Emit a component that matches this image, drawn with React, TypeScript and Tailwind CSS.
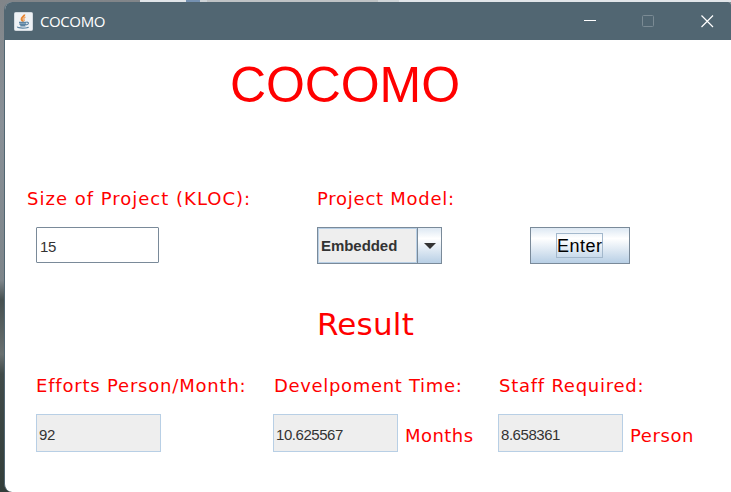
import type { ReactNode } from "react";

function Label({ children, className = "" }: { children: ReactNode; className?: string }) {
  return (
    <span
      className={
        "block shrink-0 whitespace-nowrap font-['DejaVu_Sans',sans-serif] text-[18px] leading-6 text-[#ff0000] " +
        className
      }
    >
      {children}
    </span>
  );
}

function ResultField({ value }: { value: string }) {
  return (
    <div className="flex h-[38px] w-[125px] shrink-0 items-center border border-[#b8cfe5] bg-[#eeeeee] pt-1 pl-0.5 text-[15px] tracking-[-0.45px] text-[#333333]">
      {value}
    </div>
  );
}

function JavaIcon() {
  return (
    <svg width="19" height="19" viewBox="0 0 19 19" fill="none">
      <rect x="0.5" y="0.5" width="18" height="18" rx="1" fill="#eef1f4" stroke="#d2d9df" />
      <path d="M10.3 2.5C10.8 4.5 7.2 5 7.6 7.2C7.8 8.4 9 8.8 9 9.8" stroke="#e8852f" strokeWidth="2" />
      <path d="M11.5 5C9.5 6 9.4 7.2 10.5 8.8" stroke="#eda05f" strokeWidth="1.3" />
      <path d="M5 10.5H12.5M5.5 12.3H12M6.3 13.8H11.5" stroke="#5e85a3" strokeWidth="1.4" />
      <path d="M12.5 10.2C15.5 9.8 15 12.5 12 12.8" stroke="#5e85a3" strokeWidth="1.2" />
      <path d="M3.5 14.7C3 16.5 14 16.5 14.5 14.9" stroke="#5e85a3" strokeWidth="1.3" />
    </svg>
  );
}

function TitleBar() {
  return (
    <header className="flex h-[38px] shrink-0 items-center bg-[#516672] pl-[9px]">
      <JavaIcon />
      <span className="ml-[7px] w-[66px] whitespace-nowrap font-['Open_Sans',sans-serif] text-[15px] leading-5 tracking-[-0.4px] text-white">
        COCOMO
      </span>
      <svg className="ml-[477px] shrink-0" width="132" height="14" viewBox="0 0 132 14" fill="none">
        <path d="M1 6.5H13" stroke="#ffffff" />
        <rect x="59.5" y="1.5" width="11" height="11" rx="1" stroke="#7b8b94" />
        <path d="M118.5 1.5L130 13M130 1.5L118.5 13" stroke="#ffffff" strokeWidth="1.2" />
      </svg>
    </header>
  );
}

export default function App() {
  return (
    <div className="flex h-[492px] w-[731px] flex-col overflow-hidden bg-[linear-gradient(#818589_0%,#899097_25%,#7d858a_57%,#465050_61%,#697070_72%,#414b49_76%,#333e3a_100%)] font-['Liberation_Sans',Arial,sans-serif]">
      <div className="flex h-0.5 shrink-0">
        <div className="ml-[140px] w-[46px] bg-[#e1e5e9]" />
        <div className="w-[14px] bg-[#7591b1]" />
        <div className="w-[7px] bg-[#cdd3d7]" />
        <div className="w-[171px] bg-[#bfc3c5]" />
        <div className="w-[21px] bg-[#d0d5d8]" />
        <div className="flex-1 bg-[#e1e5e9]" />
      </div>
      <div className="ml-1 flex h-[490px] w-[727px] flex-col overflow-hidden rounded-l-[8px] rounded-tr-[3px] border-l border-[#516672] bg-white">
        <TitleBar />
        <main className="flex flex-1 flex-col">
          <h1 className="mt-[17px] ml-[225px] h-[56px] whitespace-nowrap text-[50px] leading-[56px] tracking-[-0.1px] text-[#ff0000]">
            COCOMO
          </h1>

          <div className="mt-[74px] flex pl-[22px]">
            <Label className="w-[290px] tracking-[1px]">Size of Project (KLOC):</Label>
            <Label className="tracking-[0.75px]">Project Model:</Label>
          </div>

          <div className="mt-4 flex items-start pl-[31px]">
            <div className="flex h-9 w-[123px] items-center rounded-[1px] border border-[#7a8a99] bg-white pt-1 pl-[3px] text-[15px] tracking-[-0.45px] text-[#333333]">
              15
            </div>
            <div className="ml-[158px] flex h-[37px] w-[125px] border border-[#7a8a99]">
              <div className="flex w-[99px] items-center border border-[#b8cfe5] bg-[#eeeeee] pt-0.5 pl-0.5 text-[15px] font-bold tracking-[-0.05px] text-[#333333]">
                Embedded
              </div>
              <div className="flex flex-1 items-center justify-center border-l border-[#7a8a99] bg-[linear-gradient(#dde8f3_0%,#ffffff_30%,#b8cfe5_100%)]">
                <svg width="12" height="6" viewBox="0 0 12 6">
                  <path d="M0 0H12L6 6Z" fill="#333333" />
                </svg>
              </div>
            </div>
            <button className="ml-[88px] flex h-[37px] w-[100px] items-center border border-[#7a8a99] bg-[linear-gradient(#dde8f3_0%,#ffffff_30%,#b8cfe5_100%)] pl-[25px]">
              <span className="flex h-[25px] w-[47px] items-center border border-[#a3b8cc] pt-0.5 text-[18px] tracking-[0.5px] text-black">
                Enter
              </span>
            </button>
          </div>

          <h2 className="mt-[40px] ml-[312px] h-10 whitespace-nowrap font-['DejaVu_Sans',sans-serif] text-[31px] leading-10 tracking-[0.2px] text-[#ff0000]">
            Result
          </h2>

          <div className="mt-[30px] flex pl-[31px]">
            <Label className="w-[238px] tracking-[0.8px]">Efforts Person/Month:</Label>
            <Label className="w-[225px] tracking-[0.67px]">Develpoment Time:</Label>
            <Label className="tracking-[0.75px]">Staff Required:</Label>
          </div>

          <div className="mt-4 flex items-center pl-[31px]">
            <ResultField value="92" />
            <div className="ml-[112px] flex w-[225px] items-center gap-[7px]">
              <ResultField value="10.625567" />
              <Label className="mt-1.5 tracking-[0.45px]">Months</Label>
            </div>
            <div className="flex items-center gap-[7px]">
              <ResultField value="8.658361" />
              <Label className="mt-1.5 tracking-[0.6px]">Person</Label>
            </div>
          </div>
        </main>
      </div>
    </div>
  );
}
